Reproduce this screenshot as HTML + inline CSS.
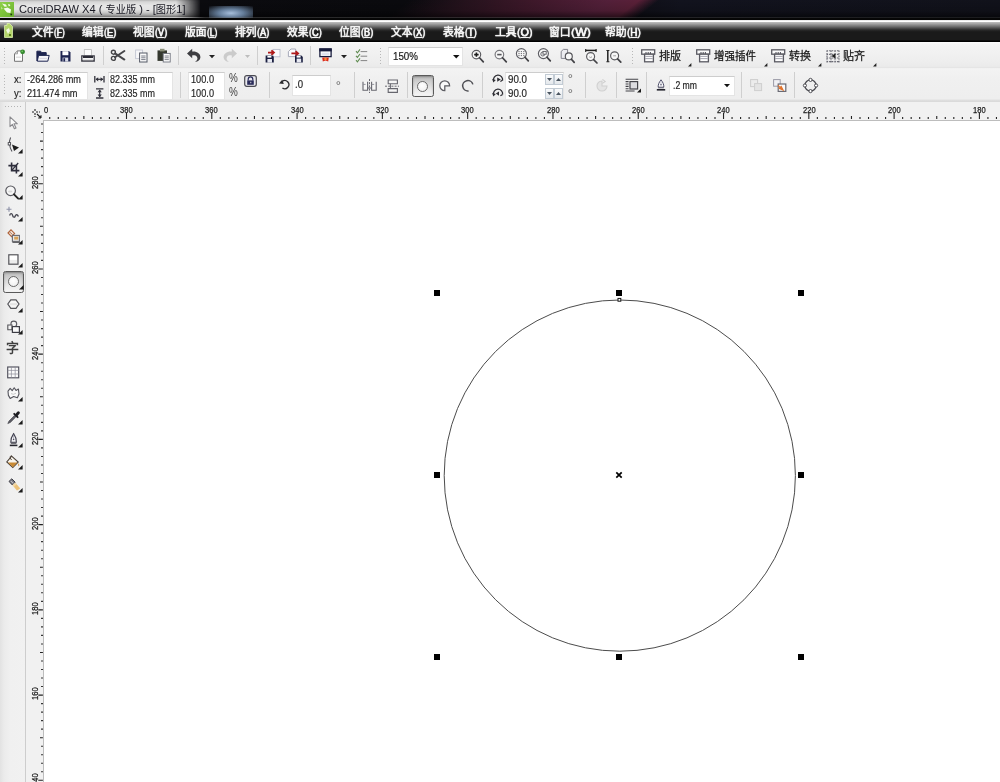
<!DOCTYPE html>
<html lang="zh-CN"><head><meta charset="utf-8"><title>CorelDRAW X4 ( 专业版 ) - [图形1]</title>
<style>
*{box-sizing:border-box;margin:0;padding:0}
html,body{width:1000px;height:782px;overflow:hidden;background:#fff}
body{position:relative;font-family:'Liberation Sans','Noto Sans CJK SC',sans-serif;color:#222}
.a{position:absolute}
.t{position:absolute;white-space:nowrap;line-height:1}
svg{position:absolute;overflow:visible}
.sep{position:absolute;width:1px;background:#d0d0d0}
.box{position:absolute;background:#fff;border:1px solid #e4e4e4;border-top-color:#cdcdcd}
.grip{position:absolute;width:1px}
</style></head>
<body>
<div id="root" style="position:absolute;left:0;top:0;width:1000px;height:782px;will-change:transform">
<div class="a" id="titlebar" style="left:0;top:0;width:1000px;height:18px;overflow:hidden;background:linear-gradient(90deg,#0c0c10 0,#0a0a0e 400px,#0d0c12 600px,#12131e 680px,#11121b 1000px)"><div class="a" style="left:398px;top:-4px;width:250px;height:26px;background:linear-gradient(90deg,rgba(42,20,32,0) 0,#24121c 22%,#3e182a 50%,#54203a 80%,#5a2038 92%,rgba(60,24,44,.0) 100%);transform:skewX(-52deg)"></div></div>
<div class="a" style="left:0;top:0;width:1000px;height:18px;background:linear-gradient(180deg,rgba(0,0,0,0) 0,rgba(0,0,0,.15) 60%,rgba(0,0,0,.6) 100%)"></div>
<div class="a" style="left:0;top:0;width:200px;height:17.5px;background:linear-gradient(180deg,#b4b4b4 0,#d6d6d6 10%,#e6e6e6 30%,#e4e4e4 52%,#cdcdcd 68%,#a8a8a8 82%,#7c7c7c 92%,#565656 100%);-webkit-mask-image:linear-gradient(90deg,#000 0,#000 176px,rgba(0,0,0,.55) 188px,transparent 201px);mask-image:linear-gradient(90deg,#000 0,#000 176px,rgba(0,0,0,.55) 188px,transparent 201px)"></div>
<div class="a" style="left:209px;top:6px;width:44px;height:13px;background:radial-gradient(ellipse at 50% 55%,rgba(175,200,230,.95) 0,rgba(140,175,215,.7) 40%,rgba(90,120,170,0) 100%)"></div>
<div class="a" style="left:0;top:1.5px;width:13.6px;height:15px;background:linear-gradient(135deg,#8ed048 0,#7cc23a 50%,#6cb030 100%)"></div>
<svg style="left:0;top:1.5px" width="14" height="15" viewBox="0 0 14 15"><path d="M2 1.6 L6 2.4 L7 4.4 L4.6 4.8 Z" fill="#f2fae6"/><path d="M8 2 L10 2.4 L10.2 4 L8.6 4.2 Z" fill="#eaf6d8"/><path d="M3.6 6.4 L7.6 5.4 L11 7.4 L10.4 11 L7 10.4 Z" fill="#f6fcee"/><path d="M1 4.4 L2.6 6.6 L1.6 7.4 Z" fill="#d8efb8"/><rect x="10.4" y="11.6" width="1.7" height="1.7" fill="#1c3a0c"/></svg>
<div class="a" style="left:0;top:16.8px;width:1000px;height:1px;background:linear-gradient(90deg,rgba(225,225,225,.9) 0,rgba(215,215,215,.85) 175px,rgba(120,120,120,.35) 205px,rgba(70,70,70,.3) 1000px)"></div>
<div class="a" style="left:0;top:17.8px;width:1000px;height:2px;background:#060606"></div>
<div class="a" style="left:0;top:19.8px;width:1000px;height:1.6px;background:linear-gradient(180deg,#cacaca,#efefef 55%,#c4c4c4)"></div>
<div class="a" id="menubar" style="left:0;top:21.5px;width:1000px;height:20.5px;background:linear-gradient(180deg,#c0c0c0 0,#a6a6a6 8%,#888 16%,#6a6a6a 24%,#4c4c4c 31%,#323232 38%,#212121 44%,#1a1a1a 50%,#1a1a1a 91%,#000 94%,#000 100%)"></div>
<svg style="left:4px;top:23px" width="9" height="15" viewBox="0 0 9 15"><path d="M0.5 2.5 L3 2.5 L3 0.5 L5.5 0.5 L8.5 3.5 L8.5 14.5 L0.5 14.5 Z" fill="#b5d66b" stroke="#dbeeb0" stroke-width=".8"/><path d="M2 7 L5 5 L6 8 L4 11 Z" fill="#f2fae0"/><rect x="5" y="11" width="2" height="2" fill="#5b7d20"/></svg>
<div class="a" id="tb1" style="left:0;top:42px;width:1000px;height:27px;background:linear-gradient(180deg,#fcfcfc 0,#f5f5f5 8%,#f2f2f2 30%,#eeeeee 70%,#ebebeb 90%,#e4e4e4 95%,#f9f9f9 100%)"></div>
<div class="a" id="tb2" style="left:0;top:69px;width:1000px;height:33px;background:linear-gradient(180deg,#f3f3f3 0,#f0f0f0 30%,#eeeeee 90%,#dcdcdc 96%,#e2e2e2 100%)"></div>
<div class="grip" style="left:4px;top:48px;height:16px;background:repeating-linear-gradient(180deg,#b8b8b8 0,#b8b8b8 1px,transparent 1px,transparent 3px)"></div>
<div class="grip" style="left:380px;top:48px;height:16px;background:repeating-linear-gradient(180deg,#b8b8b8 0,#b8b8b8 1px,transparent 1px,transparent 3px)"></div>
<div class="grip" style="left:632px;top:48px;height:16px;background:repeating-linear-gradient(180deg,#b8b8b8 0,#b8b8b8 1px,transparent 1px,transparent 3px)"></div>
<div class="grip" style="left:4px;top:75px;height:21px;background:repeating-linear-gradient(180deg,#b8b8b8 0,#b8b8b8 1px,transparent 1px,transparent 3px)"></div>
<div class="sep" style="left:103px;top:46px;height:19px;background:#cfcfcf"></div>
<div class="sep" style="left:178px;top:46px;height:19px;background:#cfcfcf"></div>
<div class="sep" style="left:257px;top:46px;height:19px;background:#cfcfcf"></div>
<div class="sep" style="left:310px;top:46px;height:19px;background:#cfcfcf"></div>
<div class="sep" style="left:180px;top:72px;height:26px;background:#cfcfcf"></div>
<div class="sep" style="left:269px;top:72px;height:26px;background:#cfcfcf"></div>
<div class="sep" style="left:354px;top:72px;height:26px;background:#cfcfcf"></div>
<div class="sep" style="left:407px;top:72px;height:26px;background:#cfcfcf"></div>
<div class="sep" style="left:482px;top:72px;height:26px;background:#cfcfcf"></div>
<div class="sep" style="left:585px;top:72px;height:26px;background:#cfcfcf"></div>
<div class="sep" style="left:616px;top:72px;height:26px;background:#cfcfcf"></div>
<div class="sep" style="left:646px;top:72px;height:26px;background:#cfcfcf"></div>
<div class="sep" style="left:741px;top:72px;height:26px;background:#cfcfcf"></div>
<div class="sep" style="left:794px;top:72px;height:26px;background:#cfcfcf"></div>
<svg style="left:13px;top:49px" width="13" height="13" viewBox="0 0 13 13"><path d="M1.5 4.8 L4.5 1.9 H9.5 V12.3 H1.5 Z" fill="#fdfdfd" stroke="#747474" stroke-width="1"/><path d="M1.5 4.8 H4.5 V1.9" fill="none" stroke="#8a8a8a" stroke-width=".8"/><path d="M3 8.2h5" stroke="#d4d4d4" stroke-width="1"/><circle cx="9.6" cy="2.8" r="2.4" fill="#35882f"/><circle cx="9.2" cy="2.3" r=".9" fill="#6cc45c"/></svg>
<svg style="left:36px;top:50px" width="14" height="12" viewBox="0 0 14 12"><path d="M.9 11 V1.2 H4.6 L5.6 2.6 H10.2 V5" fill="#1e2550" stroke="#1e2550" stroke-width="1"/><path d="M1.3 11.2 L2.5 5.4 H13.2 L11.8 11.2 Z" fill="#f4f4f8" stroke="#1e2550" stroke-width="1"/><path d="M3.6 8.4 h7.4" stroke="#d4d4de" stroke-width="1"/></svg>
<svg style="left:60px;top:50px" width="11" height="12" viewBox="0 0 11 12"><path d="M.5 1 H9 L10.5 2.5 V11.5 H.5 Z" fill="#1e2550"/><rect x="2.4" y="1.2" width="6" height="4" fill="#fff"/><rect x="2.6" y="7.6" width="5.6" height="3.9" fill="#d8dbe8"/><rect x="3.4" y="8.2" width="1.7" height="3.3" fill="#1e2550"/></svg>
<svg style="left:81px;top:49px" width="14" height="13" viewBox="0 0 14 13"><rect x="3.3" y=".6" width="7.2" height="6" fill="#fcfcfc" stroke="#b9b9b9" stroke-width=".8"/><path d="M.8 12 V6.8 H13.2 V12 Z" fill="#f4f4f4" stroke="#3a3a44" stroke-width="1.3"/><rect x="2" y="7" width="10" height="2" fill="#2a2a34"/><path d="M2 10.8h10" stroke="#cfcfcf" stroke-width=".8"/></svg>
<svg style="left:110px;top:48px" width="16" height="14" viewBox="0 0 16 14"><circle cx="3.4" cy="4.2" r="2" fill="none" stroke="#454548" stroke-width="1.4"/><circle cx="3.4" cy="10.4" r="2" fill="none" stroke="#454548" stroke-width="1.4"/><path d="M5 5.4 L14.4 11.6 M5 9.2 L14.4 3" stroke="#454548" stroke-width="1.9" stroke-linecap="round"/></svg>
<svg style="left:135px;top:49px" width="13" height="14" viewBox="0 0 13 14"><rect x=".6" y="1" width="7" height="8.6" fill="#f6f6f8" stroke="#c3c6d2" stroke-width=".9"/><rect x="4.6" y="4" width="7.4" height="9" fill="#fdfdfd" stroke="#555a66" stroke-width="1"/><path d="M6.2 7h4.4M6.2 8.8h4.4M6.2 10.6h4.4" stroke="#6a6e7a" stroke-width=".9"/></svg>
<svg style="left:157px;top:48px" width="14" height="15" viewBox="0 0 14 15"><rect x=".5" y="2.4" width="9.5" height="10.5" fill="#34382e" /><rect x="3" y=".8" width="4.5" height="2.6" fill="#8a8f7a"/><rect x="6.2" y="5.4" width="7" height="8.6" fill="#fcfcfc" stroke="#70747e" stroke-width=".9"/><path d="M7.6 8h4.2M7.6 9.8h4.2M7.6 11.6h4.2" stroke="#7a7e88" stroke-width=".9"/></svg>
<svg style="left:186px;top:48px" width="16" height="15" viewBox="0 0 16 15"><path d="M1 5.4 L6.2 .8 V3.6 C11 3.2 14.6 5.8 14.4 9.6 C14.2 12.4 11.6 14 9 13.8 C11.4 12.8 12 10.6 11 9 C10 7.4 8 7.2 6.2 7.4 V10.2 Z" fill="#3e3e42"/></svg>
<svg style="left:222px;top:48px" width="16" height="15" viewBox="0 0 16 15"><path d="M15 5.4 L9.8 .8 V3.6 C5 3.2 1.4 5.8 1.6 9.6 C1.8 12.4 4.4 14 7 13.8 C4.6 12.8 4 10.6 5 9 C6 7.4 8 7.2 9.8 7.4 V10.2 Z" fill="#cbcbcb"/></svg>
<svg style="left:264px;top:48px" width="17" height="15" viewBox="0 0 17 15"><rect x="9" y="1.4" width="7" height="7.4" fill="#fbfbfd" stroke="#b8bccb" stroke-width=".9"/><path d="M4 4.6 H9.4 M7.4 2.4 L10 4.6 L7.4 6.8" stroke="#b01a1a" stroke-width="1.7" fill="none"/><path d="M1.6 7.4 H8.4 L9.8 8.8 V14.6 H1.6 Z" fill="#1a1f40"/><rect x="3.4" y="11" width="4.6" height="3.6" fill="#e7e9f2"/><rect x="3.4" y="7.8" width="4" height="1.8" fill="#fff"/></svg>
<svg style="left:287px;top:48px" width="17" height="15" viewBox="0 0 17 15"><path d="M1.4 8.6 V3.6 L4 1 H8.6 V8.6 Z" fill="#fbfbfd" stroke="#9fa3b2" stroke-width=".9"/><path d="M4.4 5.4 H10.4 M8.6 3.2 L11.2 5.4 L8.6 7.6" stroke="#b01a1a" stroke-width="1.7" fill="none"/><path d="M8 7.6 H14.4 L15.8 9 V14.4 H8 Z" fill="#1a1f40"/><rect x="9.6" y="10.6" width="4.6" height="3.8" fill="#e7e9f2"/><rect x="9.6" y="7.8" width="4" height="1.8" fill="#fff"/></svg>
<svg style="left:319px;top:48px" width="13" height="15" viewBox="0 0 13 15"><rect x=".9" y="1" width="11.2" height="7.6" fill="#fff" stroke="#171b3c" stroke-width="1.3"/><rect x=".3" y=".4" width="12.4" height="3" fill="#171b3c"/><rect x="2.6" y="4.6" width="7.8" height="2.8" fill="#dfe2ee"/><path d="M3.2 9.4 H9.8 L9.2 13.4 L6.5 12.4 L3.8 13.4 Z" fill="#dc2c1c"/><circle cx="6.5" cy="11" r="1.3" fill="#f6963a"/></svg>
<svg style="left:355px;top:48px" width="13" height="15" viewBox="0 0 13 15"><path d="M1 3.2 l1.4 1.6 l2.6 -3.4 M1 7.8 l1.4 1.6 l2.6 -3.4 M1 12.2 l1.4 1.6 l2.6 -3.4" stroke="#5f8c50" stroke-width="1.05" fill="none"/><path d="M5.6 3.6 h6.6 M5.6 8.2 h6.6 M5.6 12.6 h6.6" stroke="#858585" stroke-width="1"/></svg>
<svg style="left:470.5px;top:48.5px" width="14" height="15" viewBox="0 0 14 15"><circle cx="5.4" cy="5.6" r="4.3" fill="#f7f7f7" stroke="#5a5a5e" stroke-width="1.15"/><path d="M3.2 5.6 h4.4 M5.4 3.4 v4.4" stroke="#1c1c1c" stroke-width="1.6"/><path d="M8.5 8.7 L12.3 12.9" stroke="#424246" stroke-width="1.7" stroke-linecap="round"/></svg>
<svg style="left:493.5px;top:48.5px" width="14" height="15" viewBox="0 0 14 15"><circle cx="5.4" cy="5.6" r="4.3" fill="#f7f7f7" stroke="#77777c" stroke-width="1.15"/><path d="M3.2 5.6 h4.4" stroke="#55555a" stroke-width="1.6"/><path d="M8.5 8.7 L12.3 12.9" stroke="#424246" stroke-width="1.7" stroke-linecap="round"/></svg>
<svg style="left:515.5px;top:48px" width="15" height="15" viewBox="0 0 15 15"><circle cx="5.4" cy="5.6" r="5" fill="#f7f7f7" stroke="#5e5e64" stroke-width="1.15"/><path d="M2.4 3.6h6M2.4 5.6h6M2.4 7.6h6" stroke="#6c6c72" stroke-width="1" stroke-dasharray="1.2 1.2"/><path d="M9.0 9.2 L12.3 12.9" stroke="#424246" stroke-width="1.7" stroke-linecap="round"/></svg>
<svg style="left:537.5px;top:48px" width="15" height="15" viewBox="0 0 15 15"><circle cx="5.4" cy="5.6" r="5" fill="#f7f7f7" stroke="#5e5e64" stroke-width="1.15"/><circle cx="4.8" cy="6" r="2" fill="none" stroke="#5a5a60" stroke-width=".9"/><rect x="5" y="3.4" width="3.2" height="2.8" fill="#f7f7f7" stroke="#5a5a60" stroke-width=".9"/><path d="M9.0 9.2 L12.3 12.9" stroke="#424246" stroke-width="1.7" stroke-linecap="round"/></svg>
<svg style="left:560px;top:47.5px" width="16" height="16" viewBox="0 0 16 16"><path d="M1.2 3.4 L3.4 1.4 H7.6 V10.4 H1.2 Z" fill="#ececf0" stroke="#84848e" stroke-width="1"/><circle cx="8.8" cy="8.4" r="3.5" fill="#f7f7f7" stroke="#55555a" stroke-width="1.15"/><path d="M11.4 11.2 L14.2 14.4" stroke="#424246" stroke-width="1.7" stroke-linecap="round"/></svg>
<svg style="left:584.5px;top:48.5px" width="14" height="15" viewBox="0 0 14 15"><path d="M.6 1.4 h10.6" stroke="#222" stroke-width="1.5"/><path d="M.7 0v3M11.1 0v3" stroke="#222" stroke-width="1.1"/><circle cx="5.6" cy="7.6" r="4" fill="#f7f7f7" stroke="#5a5a5e" stroke-width="1.15"/><path d="M4.2 7.8 q1.4 1.4 2.8 0" stroke="#8c8c8c" fill="none" stroke-width=".8"/><path d="M8.6 10.6 L12 14" stroke="#424246" stroke-width="1.7" stroke-linecap="round"/></svg>
<svg style="left:605.5px;top:48.5px" width="16" height="15" viewBox="0 0 16 15"><path d="M1.8 1.4 v11.4" stroke="#222" stroke-width="1.5"/><path d="M.4 1.5h3M.4 12.7h3" stroke="#222" stroke-width="1.1"/><circle cx="8.6" cy="6.8" r="4" fill="#f7f7f7" stroke="#5a5a5e" stroke-width="1.15"/><path d="M7.2 6.8 h2.8" stroke="#8c8c8c" stroke-width=".8"/><path d="M11.6 9.8 L14.8 13.2" stroke="#424246" stroke-width="1.7" stroke-linecap="round"/></svg>
<svg style="left:641px;top:49px" width="15" height="14" viewBox="0 0 15 14"><rect x=".7" y=".8" width="13" height="4.4" fill="#fafafa" stroke="#5a5a62" stroke-width="1.3"/><path d="M5 3v2M7.2 3v2M9.4 3v2" stroke="#5a5a62" stroke-width="1.1"/><rect x="3.6" y="5.2" width="8.8" height="7.6" fill="#fdfdfd" stroke="#5a5a62" stroke-width="1.3"/><path d="M4.2 7.4h7.6M4.2 9.6h7.6" stroke="#9a9aa6" stroke-width=".9"/></svg>
<svg style="left:696px;top:49px" width="15" height="14" viewBox="0 0 15 14"><rect x=".7" y=".8" width="13" height="4.4" fill="#fafafa" stroke="#5a5a62" stroke-width="1.3"/><path d="M5 3v2M7.2 3v2M9.4 3v2" stroke="#5a5a62" stroke-width="1.1"/><rect x="3.6" y="5.2" width="8.8" height="7.6" fill="#fdfdfd" stroke="#5a5a62" stroke-width="1.3"/><path d="M4.2 7.4h7.6M4.2 9.6h7.6" stroke="#9a9aa6" stroke-width=".9"/></svg>
<svg style="left:771px;top:49px" width="15" height="14" viewBox="0 0 15 14"><rect x=".7" y=".8" width="13" height="4.4" fill="#fafafa" stroke="#5a5a62" stroke-width="1.3"/><path d="M5 3v2M7.2 3v2M9.4 3v2" stroke="#5a5a62" stroke-width="1.1"/><rect x="3.6" y="5.2" width="8.8" height="7.6" fill="#fdfdfd" stroke="#5a5a62" stroke-width="1.3"/><path d="M4.2 7.4h7.6M4.2 9.6h7.6" stroke="#9a9aa6" stroke-width=".9"/></svg>
<svg style="left:826px;top:50px" width="14" height="13" viewBox="0 0 14 13"><path d="M.5 .8h13M.5 4.4h13M.5 8h13M.5 11.6h13M1 .4v12M5 .4v12M9 .4v12M13 .4v12" stroke="#6a6a74" stroke-width="1.1" stroke-dasharray="1.6 1"/><path d="M9.4 3.6 L5.4 6 L9.4 8.4 Z" fill="#222"/></svg>
<svg style="left:94px;top:76px" width="11" height="7" viewBox="0 0 11 7"><path d="M.8 0v6.6M10 0v6.6" stroke="#30303a" stroke-width="1.3"/><path d="M2 3.3h7" stroke="#30303a" stroke-width="1.2"/><path d="M1.6 3.3 L4.2 1.2 V5.4 Z M9.2 3.3 L6.6 1.2 V5.4 Z" fill="#30303a"/></svg>
<svg style="left:96px;top:87.5px" width="8" height="11" viewBox="0 0 8 11"><path d="M0 .8h7.4M0 10h7.4" stroke="#30303a" stroke-width="1.3"/><path d="M3.7 2v7" stroke="#30303a" stroke-width="1.2"/><path d="M3.7 1.6 L1.6 4.2 H5.8 Z M3.7 9.2 L1.6 6.6 H5.8 Z" fill="#30303a"/></svg>
<svg style="left:243.5px;top:74.5px" width="13" height="12" viewBox="0 0 13 12"><rect x=".7" y=".7" width="11.6" height="10.6" rx="2" fill="#e8e8ee" stroke="#4a4a52" stroke-width="1.2"/><path d="M4.2 5.6 V4.2 a2.3 2.3 0 0 1 4.6 0 V5.6" stroke="#2a2c5a" stroke-width="1.2" fill="none"/><rect x="3.2" y="5.4" width="6.6" height="4.4" fill="#2a2c5a"/><rect x="6" y="6.8" width="1.4" height="1.4" fill="#aab"/></svg>
<svg style="left:278.5px;top:79px" width="11" height="11" viewBox="0 0 11 11"><path d="M3.2 2.4 A4.1 4.1 0 1 1 3.4 9" fill="none" stroke="#2a2a2e" stroke-width="1.3"/><path d="M0 4.6 L4.8 5 L3.2 .8 Z" fill="#2a2a2e"/></svg>
<svg style="left:361.5px;top:78.5px" width="15" height="14" viewBox="0 0 15 14"><path d="M7.5 0v14" stroke="#6a6a72" stroke-width="1" stroke-dasharray="2 1.2"/><path d="M1 2.8 V11.2 H5.6 V2.8" fill="#f6f6f6" stroke="#66666e" stroke-width="1.1"/><path d="M9.6 2.8 V11.2 H14.2 V2.8" fill="#f6f6f6" stroke="#66666e" stroke-width="1.1"/><path d="M1 5.4 h2.6 M9.6 5.4 h2.6" stroke="#8a8a92" stroke-width=".9"/><path d="M5.6 9h4" stroke="#66666e" stroke-width="1"/></svg>
<svg style="left:384.5px;top:78.5px" width="14" height="14" viewBox="0 0 14 14"><path d="M0 7.2h14" stroke="#6a6a72" stroke-width="1" stroke-dasharray="2 1.2"/><path d="M3.2 1 H12.4 V4.8 H3.2 Z" fill="#f6f6f6" stroke="#66666e" stroke-width="1.1"/><path d="M3.2 9.6 H12.4 V13.4 H3.2 Z" fill="#f6f6f6" stroke="#66666e" stroke-width="1.1"/><path d="M5.4 4.8v4.8" stroke="#66666e" stroke-width="1"/></svg>
<svg style="left:438.5px;top:79.5px" width="12" height="12" viewBox="0 0 12 12"><path d="M5.8 5.8 H10.6 A4.9 4.9 0 1 0 5.8 10.6 Z" fill="#fafafa" stroke="#5c5c62" stroke-width="1.25"/></svg>
<svg style="left:461.5px;top:79.5px" width="12" height="12" viewBox="0 0 12 12"><path d="M10.9 4.4 A5.2 5.2 0 1 0 6.6 10.9" fill="none" stroke="#505055" stroke-width="1.5"/></svg>
<svg style="left:491.5px;top:73.5px" width="12" height="9" viewBox="0 0 12 9"><path d="M1.6 7 A4.6 4.6 0 1 1 10.6 6.4" fill="none" stroke="#2e2e34" stroke-width="1.3"/><path d="M.2 5 L3.8 6 L1.4 8.6 Z" fill="#2e2e34"/><path d="M5.2 3.4 L8.8 5.6 L5.2 7.8 Z" fill="#2e2e34"/><path d="M8.4 7.4 l2.2-1.4" stroke="#2e2e34" stroke-width="1.2"/></svg>
<svg style="left:491.5px;top:87.5px" width="12" height="9" viewBox="0 0 12 9"><path d="M1.6 7 A4.6 4.6 0 1 1 10.6 6.4" fill="none" stroke="#2e2e34" stroke-width="1.3"/><path d="M.2 5 L3.8 6 L1.4 8.6 Z" fill="#2e2e34"/><path d="M7 3.6 L3.8 5.6 L7 7.8 Z" fill="#2e2e34"/><path d="M8.4 7.8 l2.2-1.4" stroke="#2e2e34" stroke-width="1.2"/></svg>
<svg style="left:595.5px;top:78.5px" width="12" height="13" viewBox="0 0 12 13"><path d="M6 2 A5 5 0 1 0 11 7 H6 Z" fill="#e4e4e4" stroke="#d0d0d0" stroke-width="1.1"/><path d="M6.4 .4 L9.2 2.4 L6.4 4.4" fill="none" stroke="#cfcfcf" stroke-width="1.1"/></svg>
<svg style="left:624.5px;top:77.5px" width="17" height="15" viewBox="0 0 17 15"><path d="M.6 1.2h12.6M.6 3.6h3M.6 6h3M.6 8.4h3M.6 10.8h3M.6 13h9" stroke="#44444a" stroke-width="1.1"/><rect x="5" y="3.6" width="7.6" height="7.4" fill="#dcdce0" stroke="#44444a" stroke-width="1.2"/><path d="M16 10.6 V14.6 H12 Z" fill="#1a1a1a"/></svg>
<svg style="left:656px;top:78.5px" width="10" height="12" viewBox="0 0 10 12"><path d="M5 .8 C3.2 3 2 5.6 2.2 8.2 H7.8 C8 5.6 6.8 3 5 .8 Z" fill="#fbfbfd" stroke="#50506a" stroke-width="1"/><circle cx="5" cy="5.8" r=".8" fill="#50506a"/><path d="M5 1.6v3.6" stroke="#9a9ab0" stroke-width=".6"/><path d="M2.2 8.8h5.6" stroke="#6a6a7a" stroke-width="1"/><path d="M.8 10.8h8.4" stroke="#22222c" stroke-width="1.6"/></svg>
<svg style="left:749.5px;top:78.5px" width="13" height="13" viewBox="0 0 13 13"><rect x=".6" y=".6" width="7" height="7" fill="#ececec" stroke="#cdcdcd"/><rect x="4.6" y="4.6" width="7" height="7" fill="#e4e4e4" stroke="#cfcfcf"/></svg>
<svg style="left:772.5px;top:78.5px" width="14" height="13" viewBox="0 0 14 13"><rect x=".6" y=".6" width="6.6" height="6.6" fill="#f0f0f4" stroke="#9a9aa6" stroke-width="1"/><rect x="5.2" y="5" width="7.6" height="7.4" fill="#fafafa" stroke="#6a6a74" stroke-width="1.2"/><path d="M6.4 9.4 L10 11 L8.2 7.6 Z M5 6.4 l3 3" stroke="#e0742e" stroke-width="1.2" fill="#e0742e"/></svg>
<svg style="left:802.5px;top:77.5px" width="15" height="15" viewBox="0 0 15 15"><circle cx="7.5" cy="7.5" r="5.6" fill="none" stroke="#4a4a50" stroke-width="1.3"/><circle cx="7.5" cy="1.9" r="1.6" fill="#fff" stroke="#4a4a50" stroke-width="1"/><circle cx="7.5" cy="13.1" r="1.6" fill="#fff" stroke="#4a4a50" stroke-width="1"/><circle cx="1.9" cy="7.5" r="1.6" fill="#fff" stroke="#4a4a50" stroke-width="1"/><circle cx="13.1" cy="7.5" r="1.6" fill="#fff" stroke="#4a4a50" stroke-width="1"/></svg>
<div class="box" style="left:388px;top:47px;width:75px;height:19px"></div>
<svg style="left:453px;top:55px" width="6.5" height="3.5" viewBox="0 0 6.5 3.5"><path d="M0 0 H6.5 L3.25 3.5 Z" fill="#111"/></svg>
<svg style="left:208.5px;top:55px" width="6" height="3.2" viewBox="0 0 6 3.2"><path d="M0 0 H6 L3.0 3.2 Z" fill="#222"/></svg>
<svg style="left:245px;top:55px" width="5" height="3" viewBox="0 0 5 3"><path d="M0 0 H5 L2.5 3 Z" fill="#bdbdbd"/></svg>
<svg style="left:341px;top:55px" width="6" height="3.2" viewBox="0 0 6 3.2"><path d="M0 0 H6 L3.0 3.2 Z" fill="#222"/></svg>
<svg style="left:688px;top:63px" width="3.4" height="3.4" viewBox="0 0 4 4"><path d="M4 0 V4 H0 Z" fill="#222"/></svg>
<svg style="left:764px;top:63px" width="3.4" height="3.4" viewBox="0 0 4 4"><path d="M4 0 V4 H0 Z" fill="#222"/></svg>
<svg style="left:818px;top:63px" width="3.4" height="3.4" viewBox="0 0 4 4"><path d="M4 0 V4 H0 Z" fill="#222"/></svg>
<svg style="left:873px;top:63px" width="3.4" height="3.4" viewBox="0 0 4 4"><path d="M4 0 V4 H0 Z" fill="#222"/></svg>
<div class="box" style="left:24px;top:71.5px;width:64px;height:28px"></div>
<div class="box" style="left:107.5px;top:71.5px;width:65px;height:28px"></div>
<div class="box" style="left:188px;top:71.5px;width:37px;height:28px"></div>
<div class="box" style="left:292px;top:75px;width:39px;height:20.5px"></div>
<div class="box" style="left:505px;top:71.5px;width:59px;height:28px"></div>
<div class="box" style="left:669px;top:76px;width:66px;height:19.5px"></div>
<svg style="left:724px;top:84.3px" width="6" height="3.2" viewBox="0 0 6 3.2"><path d="M0 0 H6 L3.0 3.2 Z" fill="#111"/></svg>
<div class="a" style="left:545px;top:73.5px;width:8.5px;height:11px;border:1px solid #c2cbd4;background:linear-gradient(180deg,#fafbfc,#e4e8ec)"></div>
<svg style="left:547px;top:77.5px" width="5" height="3" viewBox="0 0 5 3"><path d="M0 0 H5 L2.5 3 Z" fill="#4a5560"/></svg>
<div class="a" style="left:554px;top:73.5px;width:8.5px;height:11px;border:1px solid #c2cbd4;background:linear-gradient(180deg,#fafbfc,#e4e8ec)"></div>
<svg style="left:556px;top:77.5px" width="5" height="3" viewBox="0 0 5 3"><path d="M0 3 H5 L2.5 0 Z" fill="#4a5560"/></svg>
<div class="a" style="left:545px;top:87.5px;width:8.5px;height:11px;border:1px solid #c2cbd4;background:linear-gradient(180deg,#fafbfc,#e4e8ec)"></div>
<svg style="left:547px;top:91.5px" width="5" height="3" viewBox="0 0 5 3"><path d="M0 0 H5 L2.5 3 Z" fill="#4a5560"/></svg>
<div class="a" style="left:554px;top:87.5px;width:8.5px;height:11px;border:1px solid #c2cbd4;background:linear-gradient(180deg,#fafbfc,#e4e8ec)"></div>
<svg style="left:556px;top:91.5px" width="5" height="3" viewBox="0 0 5 3"><path d="M0 3 H5 L2.5 0 Z" fill="#4a5560"/></svg>
<div class="a" style="left:412px;top:75px;width:21.5px;height:21.5px;border:1.3px solid #5a5a5a;border-radius:2.5px;background:linear-gradient(180deg,#bcbcbc 0,#d4d4d4 35%,#ececec 75%,#f6f6f6 100%);box-shadow:inset 0 1px 2px rgba(0,0,0,.3)"></div>
<div class="a" style="left:417px;top:80.5px;width:11px;height:11px;border:1.4px solid #6a6a6a;border-radius:50%;background:radial-gradient(circle at 45% 40%,#fff,#ececec)"></div>
<div class="a" id="hruler" style="left:26px;top:102px;width:974px;height:18px;background:#f1f1f1"></div>
<div class="a" style="left:0;top:101px;width:1000px;height:1px;background:#dadada"></div>
<div class="a" id="vruler" style="left:26px;top:102px;width:18px;height:680px;background:#f1f1f1"></div>
<div class="a" id="canvas" style="left:44px;top:120px;width:956px;height:662px;background:#fff"></div>
<div class="a" style="left:43.2px;top:119.6px;width:957px;height:1px;background:#bdbdbd"></div>
<div class="a" style="left:43.2px;top:119.6px;width:1px;height:663px;background:#bdbdbd"></div>
<svg style="left:0;top:0" width="1000" height="782" viewBox="0 0 1000 782"><path d="M49.74 118.9 v-1.8 M58.27 118.9 v-1.8 M66.80 118.9 v-1.8 M75.33 118.9 v-1.8 M83.86 118.9 v-2.9 M92.38 118.9 v-1.8 M100.91 118.9 v-1.8 M109.44 118.9 v-1.8 M117.97 118.9 v-1.8 M126.50 118.9 v-6.2 M135.03 118.9 v-1.8 M143.56 118.9 v-1.8 M152.09 118.9 v-1.8 M160.62 118.9 v-1.8 M169.14 118.9 v-2.9 M177.67 118.9 v-1.8 M186.20 118.9 v-1.8 M194.73 118.9 v-1.8 M203.26 118.9 v-1.8 M211.79 118.9 v-6.2 M220.32 118.9 v-1.8 M228.85 118.9 v-1.8 M237.38 118.9 v-1.8 M245.91 118.9 v-1.8 M254.44 118.9 v-2.9 M262.96 118.9 v-1.8 M271.49 118.9 v-1.8 M280.02 118.9 v-1.8 M288.55 118.9 v-1.8 M297.08 118.9 v-6.2 M305.61 118.9 v-1.8 M314.14 118.9 v-1.8 M322.67 118.9 v-1.8 M331.20 118.9 v-1.8 M339.73 118.9 v-2.9 M348.25 118.9 v-1.8 M356.78 118.9 v-1.8 M365.31 118.9 v-1.8 M373.84 118.9 v-1.8 M382.37 118.9 v-6.2 M390.90 118.9 v-1.8 M399.43 118.9 v-1.8 M407.96 118.9 v-1.8 M416.49 118.9 v-1.8 M425.01 118.9 v-2.9 M433.54 118.9 v-1.8 M442.07 118.9 v-1.8 M450.60 118.9 v-1.8 M459.13 118.9 v-1.8 M467.66 118.9 v-6.2 M476.19 118.9 v-1.8 M484.72 118.9 v-1.8 M493.25 118.9 v-1.8 M501.78 118.9 v-1.8 M510.31 118.9 v-2.9 M518.83 118.9 v-1.8 M527.36 118.9 v-1.8 M535.89 118.9 v-1.8 M544.42 118.9 v-1.8 M552.95 118.9 v-6.2 M561.48 118.9 v-1.8 M570.01 118.9 v-1.8 M578.54 118.9 v-1.8 M587.07 118.9 v-1.8 M595.60 118.9 v-2.9 M604.12 118.9 v-1.8 M612.65 118.9 v-1.8 M621.18 118.9 v-1.8 M629.71 118.9 v-1.8 M638.24 118.9 v-6.2 M646.77 118.9 v-1.8 M655.30 118.9 v-1.8 M663.83 118.9 v-1.8 M672.36 118.9 v-1.8 M680.88 118.9 v-2.9 M689.41 118.9 v-1.8 M697.94 118.9 v-1.8 M706.47 118.9 v-1.8 M715.00 118.9 v-1.8 M723.53 118.9 v-6.2 M732.06 118.9 v-1.8 M740.59 118.9 v-1.8 M749.12 118.9 v-1.8 M757.65 118.9 v-1.8 M766.17 118.9 v-2.9 M774.70 118.9 v-1.8 M783.23 118.9 v-1.8 M791.76 118.9 v-1.8 M800.29 118.9 v-1.8 M808.82 118.9 v-6.2 M817.35 118.9 v-1.8 M825.88 118.9 v-1.8 M834.41 118.9 v-1.8 M842.94 118.9 v-1.8 M851.47 118.9 v-2.9 M859.99 118.9 v-1.8 M868.52 118.9 v-1.8 M877.05 118.9 v-1.8 M885.58 118.9 v-1.8 M894.11 118.9 v-6.2 M902.64 118.9 v-1.8 M911.17 118.9 v-1.8 M919.70 118.9 v-1.8 M928.23 118.9 v-1.8 M936.75 118.9 v-2.9 M945.28 118.9 v-1.8 M953.81 118.9 v-1.8 M962.34 118.9 v-1.8 M970.87 118.9 v-1.8 M979.40 118.9 v-6.2 M987.93 118.9 v-1.8 M996.46 118.9 v-1.8" stroke="#222" stroke-width="1.1" fill="none"/></svg>
<svg style="left:0;top:0" width="1000" height="782" viewBox="0 0 1000 782"><path d="M42.9 124.04 h-1.8 M42.9 132.56 h-1.8 M42.9 141.08 h-2.9 M42.9 149.61 h-1.8 M42.9 158.13 h-1.8 M42.9 166.65 h-1.8 M42.9 175.18 h-1.8 M42.9 183.70 h-4.6 M42.9 192.22 h-1.8 M42.9 200.75 h-1.8 M42.9 209.27 h-1.8 M42.9 217.79 h-1.8 M42.9 226.31 h-2.9 M42.9 234.84 h-1.8 M42.9 243.36 h-1.8 M42.9 251.88 h-1.8 M42.9 260.41 h-1.8 M42.9 268.93 h-4.6 M42.9 277.45 h-1.8 M42.9 285.98 h-1.8 M42.9 294.50 h-1.8 M42.9 303.02 h-1.8 M42.9 311.54 h-2.9 M42.9 320.07 h-1.8 M42.9 328.59 h-1.8 M42.9 337.11 h-1.8 M42.9 345.64 h-1.8 M42.9 354.16 h-4.6 M42.9 362.68 h-1.8 M42.9 371.21 h-1.8 M42.9 379.73 h-1.8 M42.9 388.25 h-1.8 M42.9 396.77 h-2.9 M42.9 405.30 h-1.8 M42.9 413.82 h-1.8 M42.9 422.34 h-1.8 M42.9 430.87 h-1.8 M42.9 439.39 h-4.6 M42.9 447.91 h-1.8 M42.9 456.44 h-1.8 M42.9 464.96 h-1.8 M42.9 473.48 h-1.8 M42.9 482.00 h-2.9 M42.9 490.53 h-1.8 M42.9 499.05 h-1.8 M42.9 507.57 h-1.8 M42.9 516.10 h-1.8 M42.9 524.62 h-4.6 M42.9 533.14 h-1.8 M42.9 541.67 h-1.8 M42.9 550.19 h-1.8 M42.9 558.71 h-1.8 M42.9 567.23 h-2.9 M42.9 575.76 h-1.8 M42.9 584.28 h-1.8 M42.9 592.80 h-1.8 M42.9 601.33 h-1.8 M42.9 609.85 h-4.6 M42.9 618.37 h-1.8 M42.9 626.90 h-1.8 M42.9 635.42 h-1.8 M42.9 643.94 h-1.8 M42.9 652.46 h-2.9 M42.9 660.99 h-1.8 M42.9 669.51 h-1.8 M42.9 678.03 h-1.8 M42.9 686.56 h-1.8 M42.9 695.08 h-4.6 M42.9 703.60 h-1.8 M42.9 712.13 h-1.8 M42.9 720.65 h-1.8 M42.9 729.17 h-1.8 M42.9 737.69 h-2.9 M42.9 746.22 h-1.8 M42.9 754.74 h-1.8 M42.9 763.26 h-1.8 M42.9 771.79 h-1.8 M42.9 780.31 h-4.6" stroke="#222" stroke-width="1.1" fill="none"/></svg>
<svg style="left:31.6px;top:108.6px" width="10" height="10" viewBox="0 0 10 10"><path d="M3 0v2M3 4v2M0 3h2M4 3h2M7 3h1M3 7v1" stroke="#222" stroke-width="1.1"/><path d="M5 5 L9 9 M9 9 V6.2 M9 9 H6.2" stroke="#222" stroke-width="1.1" fill="none"/></svg>
<div class="a" id="toolbox" style="left:0;top:102px;width:26px;height:680px;background:linear-gradient(90deg,#e2e2e2 0,#ebebeb 4px,#f0f0f0 10px,#f1f1f1 100%)"></div>
<div class="a" style="left:25px;top:102px;width:1px;height:680px;background:#cdcdcd"></div>
<div class="a" style="left:5px;top:106px;width:17px;height:1px;background:repeating-linear-gradient(90deg,#b4b4b4 0,#b4b4b4 1px,transparent 1px,transparent 3px)"></div>
<div class="a" style="left:3px;top:271px;width:20.5px;height:21.5px;border:1.3px solid #5a5a5a;border-radius:2.5px;background:linear-gradient(180deg,#bcbcbc 0,#d4d4d4 35%,#ececec 75%,#f6f6f6 100%);box-shadow:inset 0 1px 2px rgba(0,0,0,.3)"></div>
<div class="a" style="left:7.5px;top:276px;width:11px;height:11px;border:1.4px solid #6a6a6a;border-radius:50%;background:radial-gradient(circle at 45% 40%,#fff,#ececec)"></div>
<svg style="left:8.5px;top:115.5px" width="10" height="14" viewBox="0 0 10 14"><path d="M1 .8 V10.6 L3.4 8.4 L5.4 12.8 L7 12 L5 7.8 H8.4 Z" fill="#fbfbfb" stroke="#8a8a8e" stroke-width="1.1" stroke-linejoin="round"/></svg>
<svg style="left:7px;top:137px" width="15" height="16" viewBox="0 0 15 16"><path d="M3.6 .6 C1.6 5 2.4 10 5 14.6" fill="none" stroke="#55555c" stroke-width="1.1"/><rect x="1.2" y="5.6" width="2.4" height="2.4" fill="#fff" stroke="#44444a" stroke-width=".9"/><path d="M5 7.6 L12 10.4 L7 14 Z" fill="#1c1c1c"/></svg>
<svg style="left:7.5px;top:161.5px" width="12" height="12" viewBox="0 0 12 12"><path d="M3.6 .4 V8.6 H11.4 M.4 3.6 H8.4 V11.6" fill="none" stroke="#2e2e3c" stroke-width="1.6"/><path d="M10.2 1 L3.8 8.4" stroke="#2e2e3c" stroke-width="1.3"/></svg>
<svg style="left:5.2px;top:184.6px" width="16" height="16" viewBox="0 0 16 16"><circle cx="5.6" cy="5.8" r="4.8" fill="#f6f6f6" stroke="#58585e" stroke-width="1.2"/><ellipse cx="5.2" cy="6.6" rx="2.2" ry="1" fill="#d8d8d8"/><path d="M9 9.4 L13 13.4" stroke="#222" stroke-width="2" stroke-linecap="round"/></svg>
<svg style="left:6px;top:205.5px" width="16" height="16" viewBox="0 0 16 16"><path d="M3 .8v5M.5 3.3h5" stroke="#8c90a6" stroke-width="1.1"/><path d="M3.6 9.4 C4.6 6.6 6.2 7.4 6.6 9.4 C7 11.6 8.8 11.8 9.4 9.8 C10 8 11.6 8.4 12.4 10.6" fill="none" stroke="#4a4a54" stroke-width="1.4"/></svg>
<svg style="left:6.5px;top:228.5px" width="16" height="16" viewBox="0 0 16 16"><path d="M1 4 L4 .8 L7.6 4.4 L4.6 7.6 Z" fill="#f4e6dc" stroke="#b0643c" stroke-width="1.1"/><path d="M3 3.2l2.4 2.4" stroke="#8a4a2a" stroke-width=".8"/><rect x="5.4" y="6.4" width="7" height="6" fill="#e8e8e8" stroke="#6a6a70" stroke-width="1.1"/><rect x="7.2" y="7.6" width="4" height="3" fill="#d8a258"/><path d="M5.4 13.4h8" stroke="#55555a" stroke-width="1"/></svg>
<svg style="left:7.5px;top:253.5px" width="12" height="12" viewBox="0 0 12 12"><rect x=".8" y=".8" width="9.2" height="9.4" fill="#ececec" stroke="#55555a" stroke-width="1.2"/><rect x="1.8" y="1.8" width="7.2" height="4" fill="#fff"/></svg>
<svg style="left:6.5px;top:299px" width="13" height="11" viewBox="0 0 13 11"><path d="M.8 5 L3.8 .8 H9 L12 5 L9 9.4 H3.8 Z" fill="#f6f6f6" stroke="#55555a" stroke-width="1.2"/><path d="M3 5.2 h7" stroke="#e4e4e4" stroke-width="2"/></svg>
<svg style="left:6.5px;top:319.5px" width="15" height="15" viewBox="0 0 15 15"><circle cx="6.8" cy="4" r="2.9" fill="#f4f4f4" stroke="#5a5a60" stroke-width="1.1"/><path d="M.8 5 H5 V9.8 H.8 Z" fill="#f4f4f4" stroke="#55555a" stroke-width="1.1"/><rect x="5.4" y="6.6" width="7" height="5.8" fill="#fafafa" stroke="#3e3e46" stroke-width="1.2"/></svg>
<svg style="left:6.5px;top:365.5px" width="13" height="13" viewBox="0 0 13 13"><rect x=".7" y="1" width="11" height="10.8" fill="#fbfbfb" stroke="#50505c" stroke-width="1.15"/><path d="M.7 4.4h11M.7 8h11M4.4 .7v11M8.2 .7v11" stroke="#8c8c9a" stroke-width=".7"/></svg>
<svg style="left:6.5px;top:387px" width="14" height="13" viewBox="0 0 14 13"><path d="M1 4.2 L3.2 1.4 L5.2 3.6 L7.2 .8 L9 3.4 L11.4 2 L12 7 L10.4 10.8 L6.6 9.6 L3.2 11.4 L1.4 8.4 Z" fill="#f8f8f8" stroke="#54545c" stroke-width="1.1" stroke-linejoin="round"/><path d="M4 6.6 q2.4 1.6 5 -.4" stroke="#c9c9c9" fill="none"/></svg>
<svg style="left:6.5px;top:409.5px" width="15" height="15" viewBox="0 0 15 15"><path d="M.8 13.6 L2 11 L7.4 5.6 L8.8 7 L3.4 12.4 Z" fill="#5c5c64" stroke="#3e3e44" stroke-width=".6"/><path d="M7.2 3.8 L10.6 7.2" stroke="#1c1c20" stroke-width="1.9" stroke-linecap="round"/><path d="M9.2 5.2 L11.4 2.8" stroke="#1c1c20" stroke-width="2.9" stroke-linecap="round"/></svg>
<svg style="left:8.5px;top:432.5px" width="10" height="14" viewBox="0 0 10 14"><path d="M4.6 .6 C2.8 3.2 1.6 6 1.8 9.2 H7.4 C7.6 6 6.4 3.2 4.6 .6 Z" fill="#f6f6fa" stroke="#3c3c4a" stroke-width="1.1"/><circle cx="4.6" cy="6.4" r=".8" fill="#50505e"/><path d="M4.6 1.4v4" stroke="#8a8a98" stroke-width=".6"/><path d="M1.8 10.2h5.6" stroke="#50505a" stroke-width="1.2"/><path d="M.8 12.4h7.6" stroke="#26262e" stroke-width="1.6"/></svg>
<svg style="left:5.5px;top:454.5px" width="15" height="14" viewBox="0 0 15 14"><path d="M5.6 1.2 L12.2 7 L6.8 12.6 L.8 7 Z" fill="#f8f4ec" stroke="#4a4038" stroke-width="1.1"/><path d="M2 7.6 H11.4 L6.8 12.2 Z" fill="#c98a34"/><path d="M5.4 .4 C3.6 1.4 4 3.6 5.6 5" fill="none" stroke="#4a4038" stroke-width="1"/><path d="M12.6 8 q1.4 2.2 .2 3.4 q-1.2 -1.2 -.2 -3.4" fill="#c98a34"/></svg>
<svg style="left:7.5px;top:477.5px" width="14" height="14" viewBox="0 0 14 14"><path d="M1 3.4 L3.8 .8 L7.2 4.2 L4.4 7 Z" fill="#7a7a84" stroke="#3c3c44" stroke-width="1"/><path d="M2.6 2.8 l2.6 2.6" stroke="#ddd" stroke-width=".8"/><path d="M4.2 7.2 L7.4 4.4 L12.2 10.4 L9 12.6 Z" fill="#f2d7a4"/><path d="M6 8.6 L8.6 6.4 L12.2 10.4 L9 12.6 Z" fill="#eab968" opacity=".7"/></svg>
<svg style="left:18.0px;top:149.1px" width="4.6" height="4.6" viewBox="0 0 4 4"><path d="M4 0 V4 H0 Z" fill="#1a1a1a"/></svg>
<svg style="left:18.0px;top:171.7px" width="4.6" height="4.6" viewBox="0 0 4 4"><path d="M4 0 V4 H0 Z" fill="#1a1a1a"/></svg>
<svg style="left:17.8px;top:195.1px" width="4.6" height="4.6" viewBox="0 0 4 4"><path d="M4 0 V4 H0 Z" fill="#1a1a1a"/></svg>
<svg style="left:18.0px;top:216.5px" width="4.6" height="4.6" viewBox="0 0 4 4"><path d="M4 0 V4 H0 Z" fill="#1a1a1a"/></svg>
<svg style="left:18.0px;top:239.5px" width="4.6" height="4.6" viewBox="0 0 4 4"><path d="M4 0 V4 H0 Z" fill="#1a1a1a"/></svg>
<svg style="left:18.0px;top:262.5px" width="4.6" height="4.6" viewBox="0 0 4 4"><path d="M4 0 V4 H0 Z" fill="#1a1a1a"/></svg>
<svg style="left:18.5px;top:284.5px" width="4.6" height="4.6" viewBox="0 0 4 4"><path d="M4 0 V4 H0 Z" fill="#1a1a1a"/></svg>
<svg style="left:18.0px;top:307.5px" width="4.6" height="4.6" viewBox="0 0 4 4"><path d="M4 0 V4 H0 Z" fill="#1a1a1a"/></svg>
<svg style="left:18.0px;top:329.5px" width="4.6" height="4.6" viewBox="0 0 4 4"><path d="M4 0 V4 H0 Z" fill="#1a1a1a"/></svg>
<svg style="left:18.0px;top:396.5px" width="4.6" height="4.6" viewBox="0 0 4 4"><path d="M4 0 V4 H0 Z" fill="#1a1a1a"/></svg>
<svg style="left:18.0px;top:419.5px" width="4.6" height="4.6" viewBox="0 0 4 4"><path d="M4 0 V4 H0 Z" fill="#1a1a1a"/></svg>
<svg style="left:18.0px;top:442.5px" width="4.6" height="4.6" viewBox="0 0 4 4"><path d="M4 0 V4 H0 Z" fill="#1a1a1a"/></svg>
<svg style="left:18.0px;top:464.5px" width="4.6" height="4.6" viewBox="0 0 4 4"><path d="M4 0 V4 H0 Z" fill="#1a1a1a"/></svg>
<svg style="left:18.0px;top:487.5px" width="4.6" height="4.6" viewBox="0 0 4 4"><path d="M4 0 V4 H0 Z" fill="#1a1a1a"/></svg>
<svg style="left:0;top:0" width="1000" height="782" viewBox="0 0 1000 782"><circle cx="619.8" cy="475.6" r="175.6" fill="none" stroke="#4c4c4c" stroke-width="1"/><path d="M616.3 472.3 l5.4 5.4 M621.7 472.3 l-5.4 5.4" stroke="#000" stroke-width="1.7"/><rect x="618.0" y="298.4" width="2.8" height="2.8" fill="#fff" stroke="#151515" stroke-width="1"/></svg>
<div class="a" style="left:434.2px;top:290px;width:6px;height:6px;background:#000"></div>
<div class="a" style="left:434.2px;top:471.8px;width:6px;height:6px;background:#000"></div>
<div class="a" style="left:434.2px;top:653.5px;width:6px;height:6px;background:#000"></div>
<div class="a" style="left:616px;top:290px;width:6px;height:6px;background:#000"></div>
<div class="a" style="left:616px;top:653.5px;width:6px;height:6px;background:#000"></div>
<div class="a" style="left:797.6px;top:290px;width:6px;height:6px;background:#000"></div>
<div class="a" style="left:797.6px;top:471.8px;width:6px;height:6px;background:#000"></div>
<div class="a" style="left:797.6px;top:653.5px;width:6px;height:6px;background:#000"></div>
<span class="t" id="title" style="left:19px;top:3.8px;font-size:11.5px;color:#1a1a24;transform-origin:0 0;transform: scaleX(0.9642);">CorelDRAW X4 ( <span style="font-size:10.6px">专业版</span> ) - [<span style="font-size:10.6px">图形</span>1]</span>
<span class="t" id="m0" style="left:32px;top:26.9px;font-size:10.8px;color:#fff;-webkit-text-stroke:.35px #f4f4f4;text-shadow:0 0 1px #ccc,0 0 2px #777;">文件<span style="display:inline-block;font-size:11.5px;transform:scaleX(0.733);transform-origin:0 50%">(<u>F</u>)</span></span>
<span class="t" id="m1" style="left:82px;top:26.9px;font-size:10.8px;color:#fff;-webkit-text-stroke:.35px #f4f4f4;text-shadow:0 0 1px #ccc,0 0 2px #777;">编辑<span style="display:inline-block;font-size:11.5px;transform:scaleX(0.801);transform-origin:0 50%">(<u>E</u>)</span></span>
<span class="t" id="m2" style="left:133px;top:26.9px;font-size:10.8px;color:#fff;-webkit-text-stroke:.35px #f4f4f4;text-shadow:0 0 1px #ccc,0 0 2px #777;">视图<span style="display:inline-block;font-size:11.5px;transform:scaleX(0.801);transform-origin:0 50%">(<u>V</u>)</span></span>
<span class="t" id="m3" style="left:185px;top:26.9px;font-size:10.8px;color:#fff;-webkit-text-stroke:.35px #f4f4f4;text-shadow:0 0 1px #ccc,0 0 2px #777;">版面<span style="display:inline-block;font-size:11.5px;transform:scaleX(0.733);transform-origin:0 50%">(<u>L</u>)</span></span>
<span class="t" id="m4" style="left:235px;top:26.9px;font-size:10.8px;color:#fff;-webkit-text-stroke:.35px #f4f4f4;text-shadow:0 0 1px #ccc,0 0 2px #777;">排列<span style="display:inline-block;font-size:11.5px;transform:scaleX(0.801);transform-origin:0 50%">(<u>A</u>)</span></span>
<span class="t" id="m5" style="left:287px;top:26.9px;font-size:10.8px;color:#fff;-webkit-text-stroke:.35px #f4f4f4;text-shadow:0 0 1px #ccc,0 0 2px #777;">效果<span style="display:inline-block;font-size:11.5px;transform:scaleX(0.801);transform-origin:0 50%">(<u>C</u>)</span></span>
<span class="t" id="m6" style="left:339px;top:26.9px;font-size:10.8px;color:#fff;-webkit-text-stroke:.35px #f4f4f4;text-shadow:0 0 1px #ccc,0 0 2px #777;">位图<span style="display:inline-block;font-size:11.5px;transform:scaleX(0.801);transform-origin:0 50%">(<u>B</u>)</span></span>
<span class="t" id="m7" style="left:391px;top:26.9px;font-size:10.8px;color:#fff;-webkit-text-stroke:.35px #f4f4f4;text-shadow:0 0 1px #ccc,0 0 2px #777;">文本<span style="display:inline-block;font-size:11.5px;transform:scaleX(0.801);transform-origin:0 50%">(<u>X</u>)</span></span>
<span class="t" id="m8" style="left:443px;top:26.9px;font-size:10.8px;color:#fff;-webkit-text-stroke:.35px #f4f4f4;text-shadow:0 0 1px #ccc,0 0 2px #777;">表格<span style="display:inline-block;font-size:11.5px;transform:scaleX(0.801);transform-origin:0 50%">(<u>T</u>)</span></span>
<span class="t" id="m9" style="left:495px;top:26.9px;font-size:10.8px;color:#fff;-webkit-text-stroke:.35px #f4f4f4;text-shadow:0 0 1px #ccc,0 0 2px #777;">工具<span style="display:inline-block;font-size:11.5px;transform:scaleX(0.938);transform-origin:0 50%">(<u>O</u>)</span></span>
<span class="t" id="m10" style="left:549px;top:26.9px;font-size:10.8px;color:#fff;-webkit-text-stroke:.35px #f4f4f4;text-shadow:0 0 1px #ccc,0 0 2px #777;">窗口<span style="display:inline-block;font-size:11.5px;transform:scaleX(1.075);transform-origin:0 50%">(<u>W</u>)</span></span>
<span class="t" id="m11" style="left:605px;top:26.9px;font-size:10.8px;color:#fff;-webkit-text-stroke:.35px #f4f4f4;text-shadow:0 0 1px #ccc,0 0 2px #777;">帮助<span style="display:inline-block;font-size:11.5px;transform:scaleX(0.870);transform-origin:0 50%">(<u>H</u>)</span></span>
<span class="t" id="zoom" style="left:392.5px;top:51.5px;font-size:10px;color:#111;transform-origin:0 0;transform: scaleX(0.9774);-webkit-text-stroke:.2px #333;">150%</span>
<span class="t" id="p0" style="left:659px;top:50.5px;font-size:11.5px;color:#111;transform-origin:0 0;transform: scaleX(0.9565);-webkit-text-stroke:.25px #222;">排版</span>
<span class="t" id="p1" style="left:714px;top:50.5px;font-size:11.5px;color:#111;transform-origin:0 0;transform: scaleX(0.9130);-webkit-text-stroke:.25px #222;">增强插件</span>
<span class="t" id="p2" style="left:789px;top:50.5px;font-size:11.5px;color:#111;transform-origin:0 0;transform: scaleX(0.9565);-webkit-text-stroke:.25px #222;">转换</span>
<span class="t" id="p3" style="left:843px;top:50.5px;font-size:11.5px;color:#111;transform-origin:0 0;transform: scaleX(0.9565);-webkit-text-stroke:.25px #222;">贴齐</span>
<span class="t" id="lx" style="left:13.5px;top:74px;font-size:10.5px;color:#222;transform-origin:0 0;transform: scaleX(0.9178);-webkit-text-stroke:.2px #333;">x:</span>
<span class="t" id="ly" style="left:13.5px;top:88px;font-size:10.5px;color:#222;transform-origin:0 0;transform: scaleX(0.9178);-webkit-text-stroke:.2px #333;">y:</span>
<span class="t" id="vx" style="left:27px;top:73.9px;font-size:11px;color:#222;transform-origin:0 0;transform: scaleX(0.8332);-webkit-text-stroke:.2px #333;">-264.286 mm</span>
<span class="t" id="vy" style="left:27px;top:87.9px;font-size:11px;color:#222;transform-origin:0 0;transform: scaleX(0.8371);-webkit-text-stroke:.2px #333;">211.474 mm</span>
<span class="t" id="w1" style="left:110px;top:73.9px;font-size:11px;color:#222;transform-origin:0 0;transform: scaleX(0.8177);-webkit-text-stroke:.2px #333;">82.335 mm</span>
<span class="t" id="w2" style="left:110px;top:87.9px;font-size:11px;color:#222;transform-origin:0 0;transform: scaleX(0.8177);-webkit-text-stroke:.2px #333;">82.335 mm</span>
<span class="t" id="s1" style="left:191px;top:73.9px;font-size:11px;color:#222;transform-origin:0 0;transform: scaleX(0.8354);-webkit-text-stroke:.2px #333;">100.0</span>
<span class="t" id="s2" style="left:191px;top:87.9px;font-size:11px;color:#222;transform-origin:0 0;transform: scaleX(0.8354);-webkit-text-stroke:.2px #333;">100.0</span>
<span class="t" id="pc1" style="left:228.8px;top:72.2px;font-size:12.5px;color:#3a3a3a;transform-origin:0 0;transform: scaleX(0.7910);">%</span>
<span class="t" id="pc2" style="left:228.8px;top:86.4px;font-size:12.5px;color:#3a3a3a;transform-origin:0 0;transform: scaleX(0.7910);">%</span>
<span class="t" id="rot" style="left:295px;top:80px;font-size:10px;color:#222;transform-origin:0 0;transform: scaleX(0.9588);-webkit-text-stroke:.2px #333;">.0</span>
<span class="t" id="a1" style="left:507.5px;top:73.9px;font-size:11px;color:#222;transform-origin:0 0;transform: scaleX(0.8869);-webkit-text-stroke:.2px #333;">90.0</span>
<span class="t" id="a2" style="left:507.5px;top:87.9px;font-size:11px;color:#222;transform-origin:0 0;transform: scaleX(0.8869);-webkit-text-stroke:.2px #333;">90.0</span>
<span class="t" id="ow" style="left:673px;top:80.5px;font-size:10px;color:#222;transform-origin:0 0;transform: scaleX(0.8639);-webkit-text-stroke:.2px #333;">.2 mm</span>
<span class="t" id="deg0" style="left:335.8px;top:78.9px;font-size:13px;color:#6a6a6a;">°</span>
<span class="t" id="deg1" style="left:567.8px;top:71.9px;font-size:13px;color:#6a6a6a;">°</span>
<span class="t" id="deg2" style="left:567.8px;top:86.9px;font-size:13px;color:#6a6a6a;">°</span>
<span class="t" id="rh0" style="left:120.2px;top:104.6px;font-size:9.4px;color:#111;transform-origin:0 0;transform: scaleX(0.8048);-webkit-text-stroke:.25px #222;">380</span>
<span class="t" id="rh1" style="left:205.49px;top:104.6px;font-size:9.4px;color:#111;transform-origin:0 0;transform: scaleX(0.8048);-webkit-text-stroke:.25px #222;">360</span>
<span class="t" id="rh2" style="left:290.78000000000003px;top:104.6px;font-size:9.4px;color:#111;transform-origin:0 0;transform: scaleX(0.8048);-webkit-text-stroke:.25px #222;">340</span>
<span class="t" id="rh3" style="left:376.07px;top:104.6px;font-size:9.4px;color:#111;transform-origin:0 0;transform: scaleX(0.8048);-webkit-text-stroke:.25px #222;">320</span>
<span class="t" id="rh4" style="left:461.36px;top:104.6px;font-size:9.4px;color:#111;transform-origin:0 0;transform: scaleX(0.8048);-webkit-text-stroke:.25px #222;">300</span>
<span class="t" id="rh5" style="left:546.6500000000001px;top:104.6px;font-size:9.4px;color:#111;transform-origin:0 0;transform: scaleX(0.8048);-webkit-text-stroke:.25px #222;">280</span>
<span class="t" id="rh6" style="left:631.94px;top:104.6px;font-size:9.4px;color:#111;transform-origin:0 0;transform: scaleX(0.8048);-webkit-text-stroke:.25px #222;">260</span>
<span class="t" id="rh7" style="left:717.2300000000001px;top:104.6px;font-size:9.4px;color:#111;transform-origin:0 0;transform: scaleX(0.8048);-webkit-text-stroke:.25px #222;">240</span>
<span class="t" id="rh8" style="left:802.5200000000001px;top:104.6px;font-size:9.4px;color:#111;transform-origin:0 0;transform: scaleX(0.8048);-webkit-text-stroke:.25px #222;">220</span>
<span class="t" id="rh9" style="left:887.8100000000001px;top:104.6px;font-size:9.4px;color:#111;transform-origin:0 0;transform: scaleX(0.8048);-webkit-text-stroke:.25px #222;">200</span>
<span class="t" id="rh10" style="left:973.1000000000001px;top:104.6px;font-size:9.4px;color:#111;transform-origin:0 0;transform: scaleX(0.8048);-webkit-text-stroke:.25px #222;">180</span>
<span class="t" id="rh0z" style="left:44px;top:104.6px;font-size:9.4px;color:#111;transform-origin:0 0;transform: scaleX(0.8048);-webkit-text-stroke:.25px #222;">0</span>
<span class="t" id="rv0" style="left:30px;top:189.1px;font-size:9.4px;color:#111;transform-origin:0 0;transform:rotate(-90deg) scaleX(0.8048);-webkit-text-stroke:.25px #222;">280</span>
<span class="t" id="rv1" style="left:30px;top:274.33px;font-size:9.4px;color:#111;transform-origin:0 0;transform:rotate(-90deg) scaleX(0.8048);-webkit-text-stroke:.25px #222;">260</span>
<span class="t" id="rv2" style="left:30px;top:359.55999999999995px;font-size:9.4px;color:#111;transform-origin:0 0;transform:rotate(-90deg) scaleX(0.8048);-webkit-text-stroke:.25px #222;">240</span>
<span class="t" id="rv3" style="left:30px;top:444.78999999999996px;font-size:9.4px;color:#111;transform-origin:0 0;transform:rotate(-90deg) scaleX(0.8048);-webkit-text-stroke:.25px #222;">220</span>
<span class="t" id="rv4" style="left:30px;top:530.02px;font-size:9.4px;color:#111;transform-origin:0 0;transform:rotate(-90deg) scaleX(0.8048);-webkit-text-stroke:.25px #222;">200</span>
<span class="t" id="rv5" style="left:30px;top:615.25px;font-size:9.4px;color:#111;transform-origin:0 0;transform:rotate(-90deg) scaleX(0.8048);-webkit-text-stroke:.25px #222;">180</span>
<span class="t" id="rv6" style="left:30px;top:700.4799999999999px;font-size:9.4px;color:#111;transform-origin:0 0;transform:rotate(-90deg) scaleX(0.8048);-webkit-text-stroke:.25px #222;">160</span>
<span class="t" id="rv7" style="left:30px;top:785.7099999999999px;font-size:9.4px;color:#111;transform-origin:0 0;transform:rotate(-90deg) scaleX(0.8048);-webkit-text-stroke:.25px #222;">140</span>
<span class="t" id="zi" style="left:6.3px;top:341px;font-size:13px;color:#3c3c3c;transform-origin:0 0;transform: scaleX(0.9988);-webkit-text-stroke:.4px #444;">字</span>
</div>
</body></html>
